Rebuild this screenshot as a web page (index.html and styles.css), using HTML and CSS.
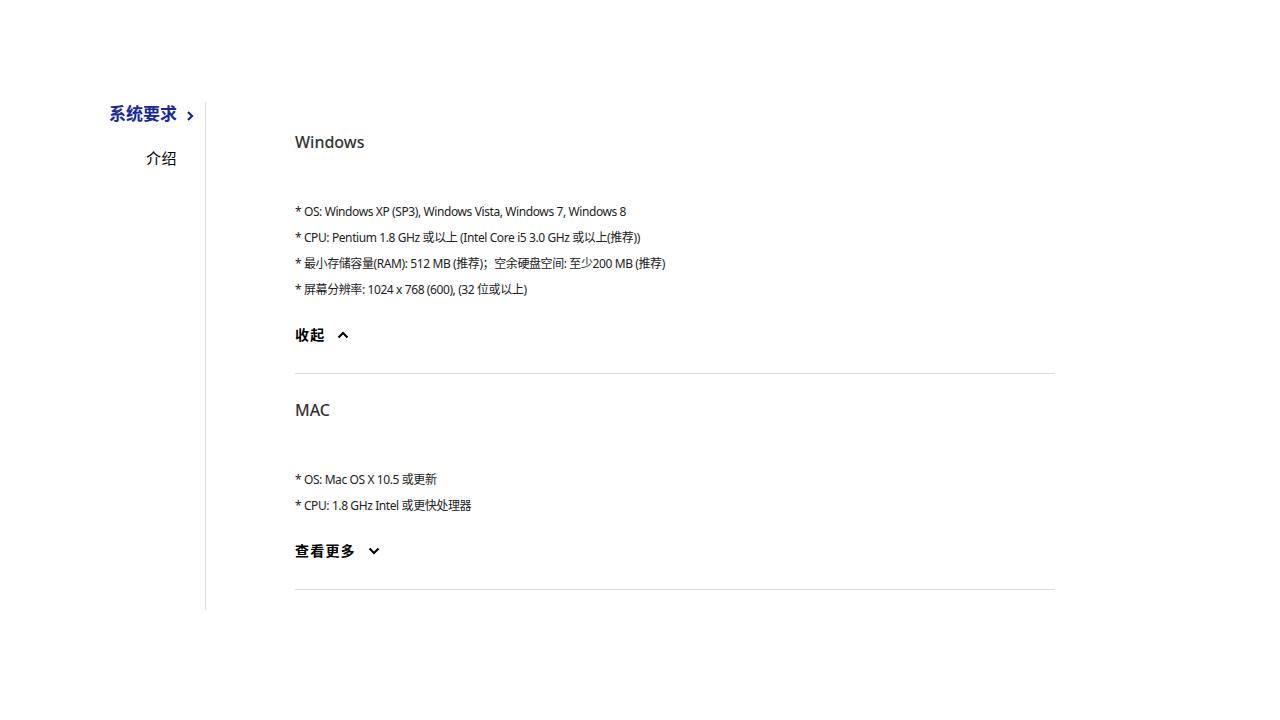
FILE: index.html
```html
<!DOCTYPE html>
<html lang="zh-CN">
<head>
<meta charset="utf-8">
<title>系统要求</title>
<link rel="stylesheet" href="styles.css">
</head>
<body>
<div class="page">
  <nav class="side">
    <a class="side-item active" href="#">系统要求<svg class="side-chev" width="10" height="12" viewBox="0 0 10 12"><path d="M3 2 L7 6 L3 10" fill="none" stroke="#1428a0" stroke-width="2.2"/></svg></a>
    <a class="side-item" href="#">介绍</a>
  </nav>
  <main class="content">
    <section class="sect">
      <h2 class="sect-title">Windows</h2>
      <ul class="spec">
        <li>* OS: Windows XP (SP3), Windows Vista, Windows 7, Windows 8</li>
        <li>* CPU: Pentium 1.8 GHz 或以上 (Intel Core i5 3.0 GHz 或以上(推荐))</li>
        <li>* 最小存储容量(RAM): 512 MB (推荐)；空余硬盘空间: 至少200 MB (推荐)</li>
        <li>* 屏幕分辨率: 1024 x 768 (600), (32 位或以上)</li>
      </ul>
      <button class="toggle">收起<svg class="toggle-ico" width="12" height="8" viewBox="0 0 12 8"><path d="M1.5 6.5 L6 2 L10.5 6.5" fill="none" stroke="#000" stroke-width="2"/></svg></button>
    </section>
    <section class="sect">
      <h2 class="sect-title">MAC</h2>
      <ul class="spec">
        <li>* OS: Mac OS X 10.5 或更新</li>
        <li>* CPU: 1.8 GHz Intel 或更快处理器</li>
      </ul>
      <button class="toggle">查看更多<svg class="toggle-ico" width="12" height="8" viewBox="0 0 12 8"><path d="M1.5 1.5 L6 6 L10.5 1.5" fill="none" stroke="#000" stroke-width="2"/></svg></button>
    </section>
  </main>
</div>
</body>
</html>
```
FILE: styles.css
```css
* { box-sizing: border-box; }
html, body { margin: 0; padding: 0; background: #fff; }
body { font-family: "Noto Sans", "Noto Sans CJK SC", sans-serif; color: #000; }
.page {
  display: flex;
  padding-top: 102px;
}
.side {
  width: 206px;
  height: 508px;
  border-right: 1px solid #ddd;
  display: flex;
  flex-direction: column;
  align-items: flex-end;
  padding-right: 28px;
}
.side-item {
  text-decoration: none;
  color: #000;
  font-size: 15px;
  line-height: 20px;
  letter-spacing: 0.5px;
  display: flex;
  align-items: center;
}
.side-item.active {
  color: #1428a0;
  font-weight: 700;
  font-size: 17px;
  line-height: 24px;
  letter-spacing: 0;
  margin-right: -18px;
}
.side-chev { margin-left: 8px; margin-top: 3px; }
.side-item + .side-item { margin-top: 22px; }
.content {
  margin-left: 89px;
  width: 760px;
}
.sect {
  border-bottom: 1px solid #ddd;
  padding-top: 28px;
  padding-bottom: 28px;
}
.sect + .sect { padding-top: 24px; }
.sect-title {
  margin: 0;
  font-size: 16px;
  font-weight: 500;
  line-height: 24px;
  color: #333;
}
.spec {
  list-style: none;
  margin: 45px 0 0;
  padding: 0;
  font-size: 12px;
  line-height: 26px;
  color: #222;
  letter-spacing: -0.4px;
}
.toggle {
  margin-top: 22px;
  padding: 0;
  border: 0;
  background: none;
  font-family: inherit;
  font-size: 14px;
  font-weight: 700;
  line-height: 20px;
  color: #000;
  letter-spacing: 1.2px;
  display: flex;
  align-items: center;
  cursor: pointer;
}
.toggle-ico { margin-left: 12px; }
```
